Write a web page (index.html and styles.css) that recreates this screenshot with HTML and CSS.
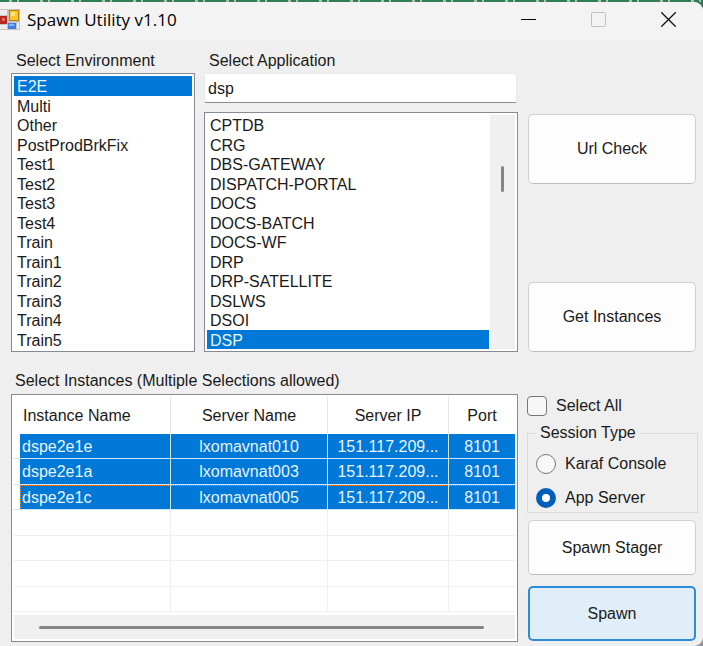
FILE: index.html
```html
<!DOCTYPE html>
<html lang="en">
<head>
<meta charset="utf-8">
<title>Spawn Utility v1.10</title>
<link rel="stylesheet" href="styles.css">
</head>
<body>
<div class="desktop">
  <div class="window">
    <header class="titlebar">
      <svg class="app-icon" width="21" height="22" viewBox="0 0 21 22" aria-hidden="true">
        <rect x="0" y="0" width="20" height="21" fill="#c4c4c4"/>
        <rect x="0" y="1" width="7" height="5" fill="#ececec"/>
        <rect x="0" y="16" width="7" height="4" fill="#ececec"/>
        <rect x="17" y="14" width="2" height="6" fill="#ececec"/>
        <rect x="0" y="7" width="7" height="8" fill="#b5281f"/>
        <rect x="2" y="9" width="3" height="3" fill="#e2695c"/>
        <rect x="9" y="1" width="10" height="11" fill="#b98400"/>
        <rect x="10" y="2" width="8" height="9" fill="#fdc628"/>
        <rect x="11" y="3" width="4" height="4" fill="#ffe383"/>
        <rect x="8" y="14" width="8" height="6" fill="#3f7fe0"/>
        <rect x="9" y="15" width="5" height="2" fill="#86b2f5"/>
      </svg>
      <h1>Spawn Utility v1.10</h1>
      <div class="window-controls">
        <button type="button" aria-label="Minimize"><svg width="15" height="15" viewBox="0 0 15 15"><path d="M0 7.5H15" stroke="#000"/></svg></button>
        <button type="button" aria-label="Maximize" disabled><svg width="15" height="15" viewBox="0 0 15 15"><rect x=".5" y=".5" width="14" height="14" rx="1" fill="none" stroke="#c0c0c0"/></svg></button>
        <button type="button" aria-label="Close"><svg width="15" height="15" viewBox="0 0 15 15"><path d="M.3 .3L14.7 14.7M14.7 .3L.3 14.7" stroke="#111" stroke-width="1.3"/></svg></button>
      </div>
    </header>
    <main class="content">
      <div class="pickers">
        <div class="field">
          <label for="env">Select Environment</label>
          <div class="frame">
            <select id="env" class="env-list" size="14">
              <option selected>E2E</option><option>Multi</option><option>Other</option><option>PostProdBrkFix</option>
              <option>Test1</option><option>Test2</option><option>Test3</option><option>Test4</option>
              <option>Train</option><option>Train1</option><option>Train2</option><option>Train3</option>
              <option>Train4</option><option>Train5</option>
            </select>
          </div>
        </div>
        <div class="field">
          <label for="filter">Select Application</label>
          <input id="filter" class="filter" type="text" value="dsp">
          <div class="frame">
            <select id="app" class="app-list" size="12" aria-label="Applications">
              <option>CPTDB</option><option>CRG</option><option>DBS-GATEWAY</option><option>DISPATCH-PORTAL</option>
              <option>DOCS</option><option>DOCS-BATCH</option><option>DOCS-WF</option><option>DRP</option>
              <option>DRP-SATELLITE</option><option>DSLWS</option><option>DSOI</option><option selected>DSP</option>
            </select>
            <div class="vscroll"><span></span></div>
          </div>
        </div>
      </div>
      <div class="actions">
        <button class="btn tall" type="button">Url Check</button>
        <button class="btn tall" type="button">Get Instances</button>
      </div>
      <section class="instances">
        <h2 id="instances-title">Select Instances (Multiple Selections allowed)</h2>
        <div class="frame grid-frame">
          <table aria-labelledby="instances-title">
            <colgroup><col class="c-name"><col class="c-server"><col class="c-ip"><col class="c-port"></colgroup>
            <thead><tr><th>Instance Name</th><th>Server Name</th><th>Server IP</th><th>Port</th></tr></thead>
            <tbody>
              <tr class="on"><td>dspe2e1e</td><td>lxomavnat010</td><td>151.117.209...</td><td>8101</td></tr>
              <tr class="on"><td>dspe2e1a</td><td>lxomavnat003</td><td>151.117.209...</td><td>8101</td></tr>
              <tr class="on current"><td>dspe2e1c</td><td>lxomavnat005</td><td>151.117.209...</td><td>8101</td></tr>
              <tr><td></td><td></td><td></td><td></td></tr>
              <tr><td></td><td></td><td></td><td></td></tr>
              <tr><td></td><td></td><td></td><td></td></tr>
              <tr><td></td><td></td><td></td><td></td></tr>
            </tbody>
          </table>
          <div class="hscroll"><span></span></div>
        </div>
      </section>
      <div class="options">
        <label class="check"><input type="checkbox">Select All</label>
        <fieldset>
          <legend>Session Type</legend>
          <label class="check"><input type="radio" name="session">Karaf Console</label>
          <label class="check"><input type="radio" name="session" checked>App Server</label>
        </fieldset>
        <button class="btn" type="button">Spawn Stager</button>
        <button class="btn primary" type="button">Spawn</button>
      </div>
    </main>
  </div>
</div>
</body>
</html>
```
FILE: styles.css
```css
* { box-sizing: border-box; }
html, body { height: 100%; }
body {
  margin: 0;
  background: #2f7d55;
  color: #1a1a1a;
  font: 16px/20px "Liberation Sans", Arial, sans-serif;
}
button, input, select { font: inherit; color: inherit; }

.desktop {
  min-height: 100%;
  padding-top: 2px;
  display: flex;
  background: repeating-linear-gradient(90deg, #2f7d55 0 9px, #a9bfb0 9px 12px, #2f7d55 12px 17px, #a9bfb0 17px 19px, #2f7d55 19px 31px) top / 100% 2px no-repeat, linear-gradient(#2f7d55 50%, #999 50%);
}
.window {
  flex: 1;
  min-width: 0;
  background: #efefef;
  border-radius: 0 9px 9px 0;
  overflow: hidden;
}

.titlebar { display: flex; align-items: center; height: 38px; background: #f3f3f3; }
.titlebar h1 {
  flex: 1;
  margin: 0 0 2px 6px;
  font: 17px/22px "Open Sans", "Segoe UI", sans-serif;
  color: #000;
}
.app-icon { margin-bottom: 2px; }
.window-controls { display: flex; margin-bottom: 4px; }
.window-controls button {
  display: grid;
  place-items: center;
  width: 70px;
  height: 32px;
  padding: 0;
  border: 0;
  background: none;
}

.content {
  display: grid;
  grid-template-columns: minmax(0, 1fr) 171px;
  column-gap: 9px;
  padding: 11px 5px 4px 11px;
}
.pickers { display: grid; grid-template-columns: minmax(0, 184fr) minmax(0, 314fr); gap: 9px; }
.field { display: flex; flex-direction: column; }
.field > label { padding-left: 5px; margin-bottom: 2px; }
.frame {
  display: flex;
  border: 1px solid #858a93;
  padding: 2px;
  background: #fff;
}
.field .frame { flex: 1; }
select {
  flex: 1;
  min-width: 0;
  padding: 0;
  border: 0;
  outline: 0;
  border-radius: 0;
  background: #fff;
  overflow: hidden;
  scrollbar-width: none;
}
.env-list { height: 273px; }
.app-list { height: 234px; }
option { height: 20px; min-height: 20px; padding: 2px 3px 0; line-height: 18px; }
option:nth-child(even) { height: 19px; min-height: 19px; line-height: 17px; }
option:checked {
  background: linear-gradient(#0078d7, #0078d7);
  -webkit-text-fill-color: #e8f4ff;
}
.filter {
  height: 30px;
  margin: 0 1px 9px 0;
  padding: 1px 3px 0;
  border: 1px solid #e8e8e8;
  border-bottom-color: #8c8c8c;
  border-radius: 2px;
  background: #fff;
  outline: 0;
}
.vscroll { width: 25px; margin-left: 1px; background: #f0f0f0; }
.vscroll span { display: block; width: 3px; height: 26px; margin: 51px auto 0 11px; border-radius: 2px; background: #858585; }

.actions {
  display: flex;
  flex-direction: column;
  justify-content: space-between;
  padding: 63px 2px 0 1px;
}
.btn {
  height: 55px;
  margin: 0 2px 0 1px;
  border: 1px solid #d0d0d0;
  border-bottom-color: #bdbdbd;
  border-radius: 5px;
  background: #fdfdfd;
}
.btn.tall { height: 70px; margin: 0; }
.btn.primary { border: 2px solid #2f8bd8; background: #e0eef9; }

.instances h2 { margin: 19px 0 3px 4px; font: inherit; }
.grid-frame { flex-direction: column; }
table { width: 100%; table-layout: fixed; border-collapse: separate; border-spacing: 0; }
.c-name { width: 157px; }
.c-ip { width: 121px; }
.c-port { width: 66px; }
th { height: 37px; padding: 0; font-weight: 400; border-right: 1px solid #e5e5e5; }
th:first-child { text-align: left; padding-left: 9px; }
td { height: 25px; padding: 1px 0 0; text-align: center; white-space: nowrap; overflow: hidden; border-right: 1px solid #f0f0f0; border-bottom: 1px solid #f0f0f0; }
tr:nth-child(even) td { height: 26px; }
th:last-child, td:last-child { border-right: 0; }
td:first-child { text-align: left; padding-left: 8px; }
.on td { background: #0078d7; color: #e8f4ff; border-color: #cfe6f8; }
.on td:first-child { background: linear-gradient(90deg, #fff 6px, #0078d7 6px); }
.current td {
  background:
    repeating-linear-gradient(90deg, #ff8728 0 1px, #0078d7 1px 2px) top / 100% 1px no-repeat,
    #0078d7;
}
.current td:first-child {
  background:
    linear-gradient(#fff, #fff) left / 6px 100% no-repeat,
    repeating-linear-gradient(90deg, #ff8728 0 1px, #0078d7 1px 2px) top / 100% 1px no-repeat,
    repeating-linear-gradient(#ff8728 0 1px, #0078d7 1px 2px) 6px 0 / 1px 100% no-repeat,
    #0078d7;
}
.hscroll { height: 24px; margin-top: 3px; padding: 11px 31px 0 25px; background: #f0f0f0; }
.hscroll span { display: block; height: 3px; border-radius: 2px; background: #858585; }

.options { display: flex; flex-direction: column; padding-top: 44px; }
.check { display: flex; align-items: center; gap: 9px; height: 20px; }
.check input {
  appearance: none;
  flex: none;
  width: 20px;
  height: 20px;
  margin: 0;
  border: 1px solid #777;
  border-radius: 4px;
  background: #f7f7f7;
}
.check input[type="radio"] { border-radius: 50%; }
.check input[type="radio"]:checked { border: 6px solid #005fb8; background: #fff; }
fieldset {
  min-width: 0;
  margin: 7px 0;
  padding: 11px 8px 4px;
  border: 1px solid #dcdcdc;
}
legend { padding: 0 4px; margin-left: 0; height: 20px; }
fieldset .check + .check { margin-top: 14px; }
.btn.primary { margin-top: 11px; }
```
